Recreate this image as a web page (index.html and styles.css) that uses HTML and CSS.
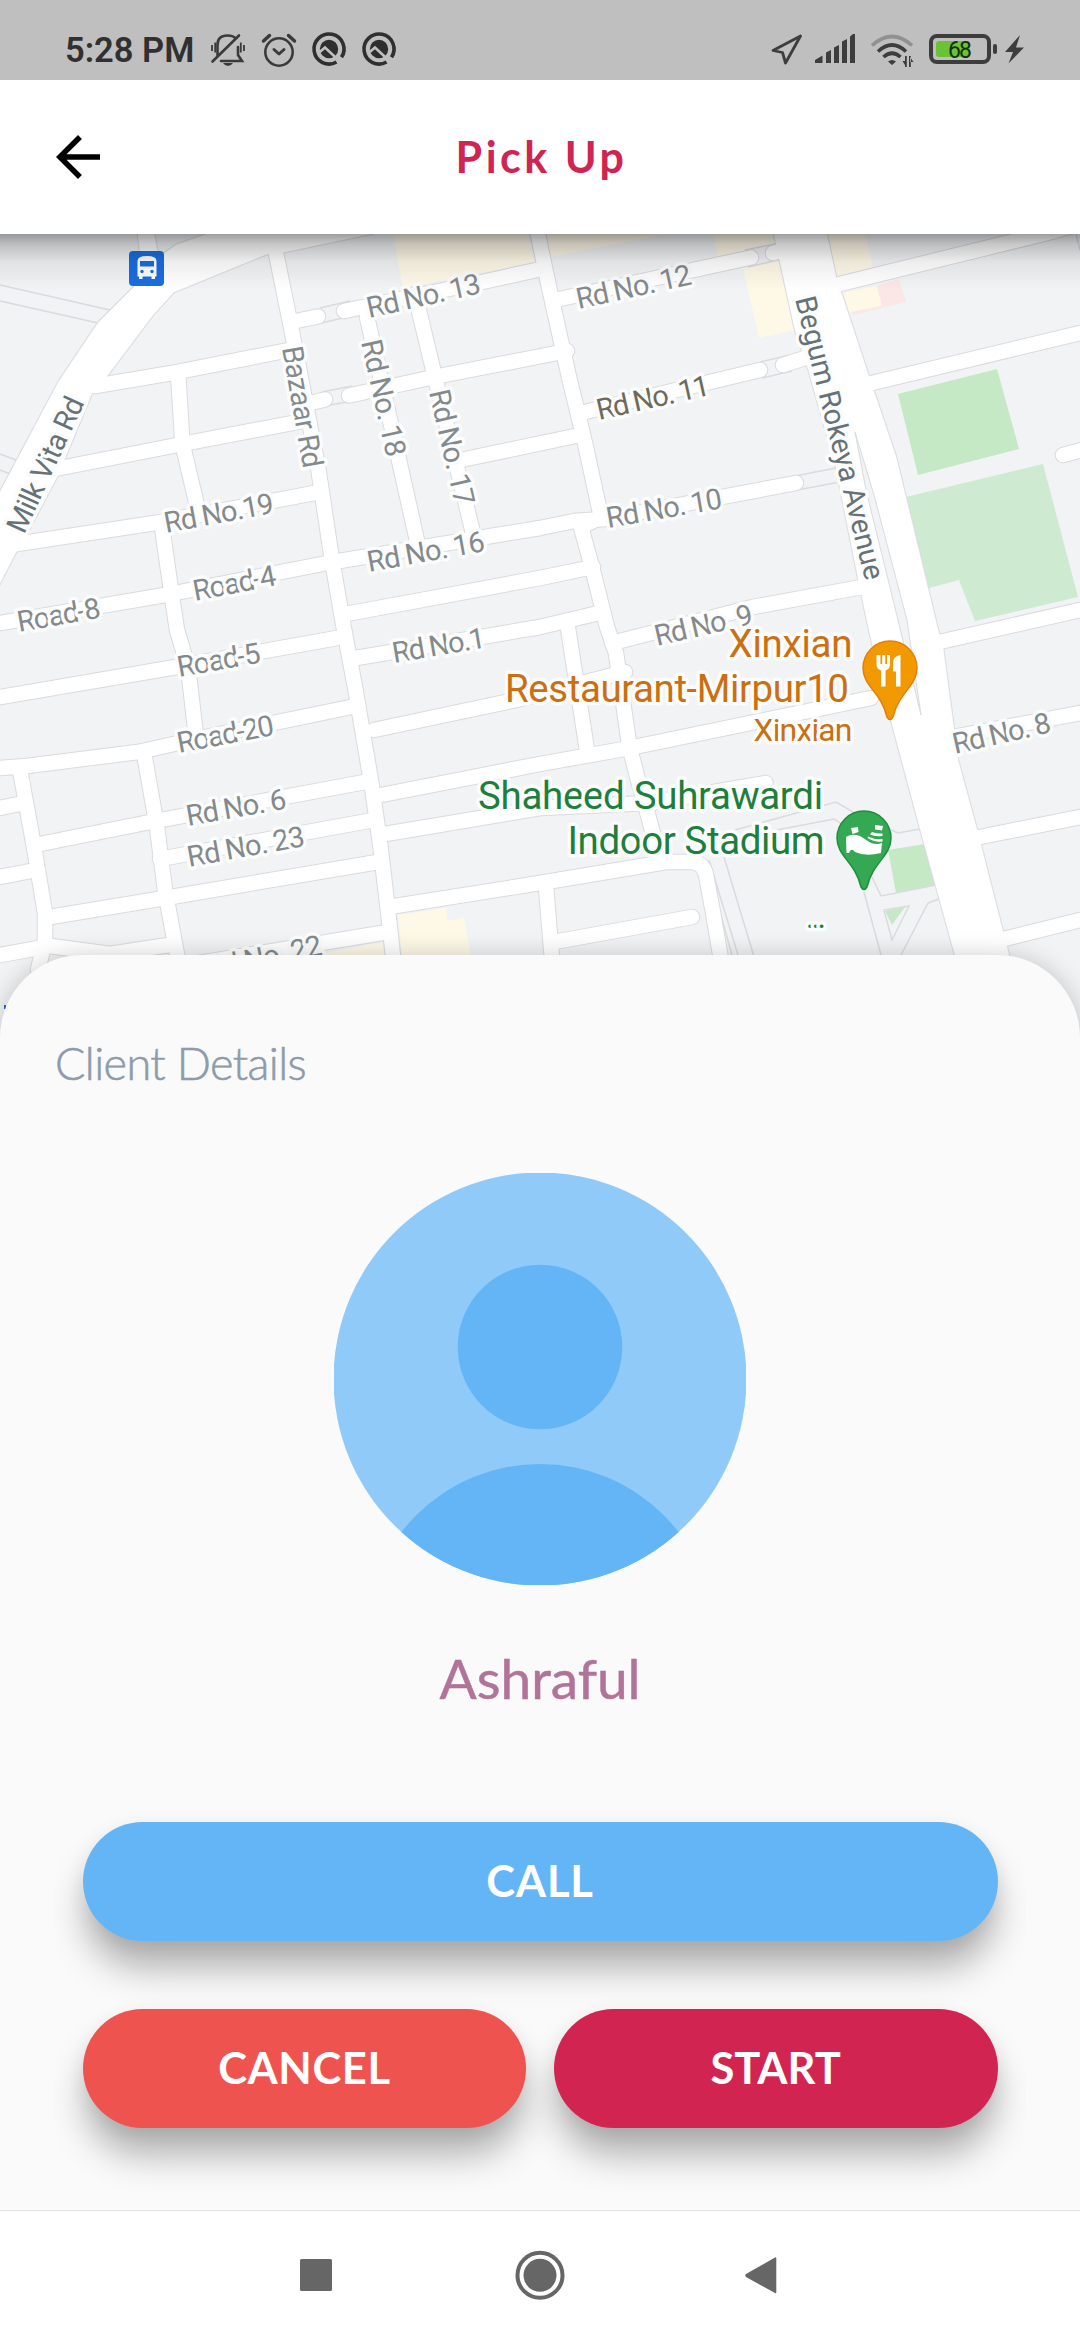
FILE: index.html
```html
<!DOCTYPE html>
<html lang="en">
<head>
<meta charset="utf-8">
<title>Pick Up</title>
<link rel="stylesheet" href="styles.css">
</head>
<body>
<div class="screen">
  <header class="status">
    <span class="clock">5:28 PM</span>
    <svg class="status-left" viewBox="210 20 190 60" width="190" height="60">
      <g fill="none" stroke="#3a3a3a" stroke-width="2.6">
        <path d="M217.500 56V45q0-9.500 10-9.500 6 0 8 3M238 47V55l4 6H221M212.500 61.500 239 35.500" stroke-linecap="round"/>
        <path d="M212 45v6M215.200 42.500v10M244 45v6M240.800 42.500v10" stroke-width="1.800"/>
        <circle cx="279" cy="52" r="13.700"/>
        <path d="M274 49.500l5 4.500 5-4.500" stroke-linecap="round" stroke-linejoin="round" stroke-width="3"/>
        <path d="M263.500 41l6-5.500M294.500 41l-6-5.500" stroke-width="3.500" stroke-linecap="round"/>
      </g>
      <path d="M223 63h10q-2 3-5 3t-5-3z" fill="#3a3a3a"/>
      <g id="qmark">
        <path d="M336.500 62A15 15 0 1 1 341.500 57.300" fill="none" stroke="#2f2f2f" stroke-width="3.600"/>
        <circle cx="329" cy="49" r="9.200" fill="#2f2f2f"/>
        <path d="M318 53.500L325 47.500 341 62.500" fill="none" stroke="#bfbfbf" stroke-width="2.600"/>
      </g>
      <use href="#qmark" x="50"/>
    </svg>
    <svg class="status-right" viewBox="765 20 265 60" width="265" height="60">
      <path d="M773 50.500L800.500 36 785.500 63 782.500 52.500z" fill="none" stroke="#3d3d3d" stroke-width="2.800" stroke-linejoin="round"/>
      <path d="M815 62.500v-2.500l7.500-4.500v7.500h-7.500zM826 63V52.500l5-2.500v13zM834 63V47.500l5-2.500v18zM842 63V41.500l5-2.500v24zM850 63V36.500l3-2.500h2v29z" fill="#3d3d3d"/>
      <g fill="none" stroke-width="3.600">
        <path d="M872 45.500Q892 27.500 912 45.500" stroke="#919191"/>
        <path d="M878 51.500Q892 38.500 906 51.500M883.500 57Q892 49.500 900.500 57" stroke="#3d3d3d"/>
      </g>
      <path d="M888 61.500q4-3 8 0l-4 3.500zM902.500 61h3v5zM906.800 56v11h-1.800V56zM909 56v11h1.800V56zM910 57l3.500 5H910z" fill="#3d3d3d"/>
      <rect x="931" y="36" width="58" height="26" rx="6" fill="none" stroke="#3d3d3d" stroke-width="4"/>
      <rect x="936" y="41" width="34" height="16" rx="3" fill="#6bc235"/>
      <rect x="993" y="44" width="4" height="10" rx="2" fill="#3d3d3d"/>
      <path d="M1020 35L1005 52h8l-4.500 11.500L1024 47.500h-8z" fill="#3d3d3d"/>
      <text class="battery" x="948" y="57.500" textLength="24">68</text>
    </svg>
  </header>
  <nav class="appbar">
    <svg class="back" viewBox="0 0 24 24" width="66" height="66"><path d="M20 11H7.830l5.590-5.590L12 4l-8 8 8 8 1.410-1.410L7.830 13H20v-2z"/></svg>
    <h1 class="title">Pick Up</h1>
  </nav>
  <main class="content">
    <svg class="map" viewBox="0 234 1080 826" width="1080" height="826">
      <defs>
        <g id="roads">
          <path d="M276 240V253L291 327 318.500 470 332 560 344 629 355 687 372 787 380.500 847 389 920 394 965"/>
          <path d="M95 386L172 373 289 350M45 471L182.500 444 303 421M310 403L325 399.500M349 395.500L434 377 567 351M291 322L318 316.500M344 311L482 282 541 269"/>
          <path d="M178 373L182.500 444 198 510M10 545L155 523 320 492M0 623L165 595 327 563 540 528 574 521 605 519 796 483"/>
          <path d="M162 527L172 597 177 630 188 667 196 736M0 697L176 667 337 638M350 659L540 627 603 612M346 614L540 578 593 567"/>
          <path d="M461 460L580 435M367 317L418 545M415 294L435.600 380 473.500 535"/>
          <path d="M0 768L27 766 138 752 196 739 351 707M374 730L516 700 625 672M20 770L34 847 45 913 45 940 38 970M0 808L24 803M0 877L36 870"/>
          <path d="M40 844L150 822 365 782M376 796L540 764 629.500 748 871 698M144 753L157 827 165 890 179 965M160 859L368 821M385 834L540 808 650 803 765.500 783"/>
          <path d="M50 917L165 898 378 862M0 955L50 946 110 954 169 945M175 967L382 933M389 907L540 883 666 862 693 862Q704 864 706 875L712 907 722 965"/>
          <path d="M546 887L551 948 553 965M554 942L692 917M567.500 625L587 750M537 230L549 287 569 377 585 443 601 517 581 527 592 567 607 627 616 653 629.500 747 638 780 648 815 660 860"/>
          <path d="M612 643L753 607 862 587M555 300L751 257.500M773 253L795 247M585 412L760 370M783 365L805 358"/>
          <path d="M839.600 284L1043 234 1080 224M872 383L1080 333M1063 455L1090 448M935 643L1080 610M953 737L1080 713M975 838L1080 817M1000 940L1080 920"/>
          <path class="wide" d="M137 228L141 258 134 287 98 323 58.500 382 0 492-10 505V605L0 583 15.500 553 26 535 57 477 92 393 107 376 153 315 174 292 267 254 285 252 370 234 390 228H225L207 234 176 245 162 255 157 250 153 228z"/>
          <path class="wide" d="M772 226L774 234 795 330 808.600 370 836 467 858.500 580 869 630 891 720 920.500 830 955 955 965 990H1018L1003 932 977 830 958 760 943 648 938 630 896 457 869 377 836 277 825 226z"/>
        </g>
        <linearGradient id="barShade" x1="0" y1="0" x2="0" y2="1">
          <stop offset="0" stop-color="#000" stop-opacity=".38"/>
          <stop offset=".18" stop-color="#000" stop-opacity=".22"/>
          <stop offset=".5" stop-color="#000" stop-opacity=".07"/>
          <stop offset="1" stop-color="#000" stop-opacity="0"/>
        </linearGradient>
      </defs>
      <rect y="234" width="1080" height="826" fill="#f1f3f5"/>
      <g fill="#fef8e7">
        <path d="M393 234H528L535 262 403 288zM545 234H667L550 257zM713 234H773L776 244 718 257zM743 268L780 261 795 330 759 338zM827 234H865L873 267 837 277zM843 293L877 286 882 306 848 313z"/>
        <path d="M398 915L446 908 448 921 464 918 473 965H403zM327 953L383 942 386 965H320z"/>
      </g>
      <path d="M877 286L899 279 906 302 853 315 851 312 882 306z" fill="#fbe7e6"/>
      <path d="M898 394L997 369 1019 449 918 475zM888 850L925 844 935 885 896 893zM885 911L905 907 892 925z" fill="#c5e8c5"/>
      <path d="M906 497L1043 464 1078 597 975 621 959 580 929 588z" fill="#ceead0"/>
      <g class="paths">
        <path d="M0 285L110 310M0 301L98 323M0 454L16 460M0 470L10 474M1076 234L1080 250"/>
        <path d="M735 830L836 802 853 812 880 825 898 833 920 829M735 838L834 819 843 825M709 860L738 955M724 857L753.500 955M872 877L881 896 936 885M864 892L881 955M884 910L909 906 892 940zM939 899L928 903 901 955"/>
        <path d="M711 880L732 955M320 308L350 301M321 323L352 316M322 392L352 386M324 406L353 401M745 250L780 243M748 267L782 259M760 362L790 355M762 378L792 371M790 477L836 468M792 491L840 482"/>
      </g>
      <use href="#roads" class="casing"/>
      <use href="#roads" class="surface"/>
      <path d="M855 432L874 495 907 620 921 715 898 620 866 490z" fill="#f1f3f5" stroke="#d9dbdf"/>
      <g class="label">
        <text transform="translate(369 318) rotate(-12.500)" textLength="116">Rd No. 13</text>
        <text transform="translate(578.500 309) rotate(-12.300)" textLength="117">Rd No. 12</text>
        <text class="dark" transform="translate(599 420) rotate(-12.700)" textLength="115">Rd No. 11</text>
        <text transform="translate(608 528) rotate(-9.800)" textLength="117">Rd No. 10</text>
        <text transform="translate(657 646) rotate(-13)" textLength="100">Rd No. 9</text>
        <text transform="translate(166 533) rotate(-10.500)" textLength="111">Rd No.19</text>
        <text transform="translate(195 601) rotate(-11)" textLength="84">Road-4</text>
        <text transform="translate(19 632) rotate(-10)" textLength="84">Road-8</text>
        <text transform="translate(369 572) rotate(-10.300)" textLength="119">Rd No. 16</text>
        <text transform="translate(179 677) rotate(-10)" textLength="84">Road-5</text>
        <text transform="translate(179 753) rotate(-10.800)" textLength="98">Road-20</text>
        <text transform="translate(188 826) rotate(-10)" textLength="101">Rd No. 6</text>
        <text transform="translate(189 867) rotate(-10.300)" textLength="119">Rd No. 23</text>
        <text transform="translate(394 663) rotate(-9.600)" textLength="94">Rd No.1</text>
        <text transform="translate(209 979) rotate(-12)" textLength="117">Rd No. 22</text>
        <text transform="translate(955 754) rotate(-12.800)" textLength="100">Rd No. 8</text>
        <text transform="translate(282 348) rotate(80)" textLength="123">Bazaar Rd</text>
        <text transform="translate(361 342) rotate(77.500)" textLength="119">Rd No. 18</text>
        <text transform="translate(429 392) rotate(77)" textLength="118">Rd No. 17</text>
        <text class="main" transform="translate(24 535) rotate(-65.400)" textLength="146">Milk Vita Rd</text>
        <text class="main" transform="translate(795 299) rotate(76)" textLength="291">Begum Rokeya Avenue</text>
      </g>
      <g class="poi food">
        <text x="728.500" y="656.700" textLength="124">Xinxian</text>
        <text x="505" y="701.700" textLength="344">Restaurant-Mirpur10</text>
        <text class="small" x="753.500" y="740.700" textLength="99">Xinxian</text>
      </g>
      <g class="poi sport">
        <text x="478" y="809" textLength="345">Shaheed Suhrawardi</text>
        <text x="567.500" y="854" textLength="257">Indoor Stadium</text>
        <text class="small" x="806" y="928" textLength="20">...</text>
      </g>
      <path d="M863 668A27 27 0 0 1 917 668C917 686 899 692 893 717Q890 722 887 717C881 692 863 686 863 668z" fill="#f29900" stroke="#e37f0a" stroke-width="1.500"/>
      <path d="M876.500 655v9q0 5 4.500 6.500V686.500h4.500V670.500q4.500-1.500 4.500-6.500v-9h-3v9h-1.800v-9h-3v9h-1.800v-9zM900.500 655V686.500h-4.500V671.500h-3V663q0-7 7.500-8z" fill="#fff"/>
      <path d="M837 838A27 27 0 0 1 891 838C891 856 873 862 867 887Q864 892 861 887C855 862 837 856 837 838z" fill="#34a853" stroke="#1e8e3e" stroke-width="1.500"/>
      <path d="M846 837Q852 833 860 836L871 843Q877 845 882 843L881 853Q866 857 855 852 851 847 849 853H846.500zM851 828l7-1 .5 5-6 2zM875 825l8 1-1 4.500-7-1zM872 832q6 2 10.500 1.500V836Q875 837 870 834.500zM868 836.500q7 3.500 14.500 2.500v2.500q-8 1-15-3.500z" fill="#fff"/>
      <rect x="129" y="251" width="35" height="35" rx="4" fill="#1a6de0"/>
      <path d="M137.500 261q0-5 9.500-5t9.500 5v15.500h-1.500V279h-3.500v-2.500h-9V279H139v-2.500h-1.500z" fill="#fff"/>
      <path d="M140 261h14v5.500h-14z" fill="#1a6de0"/>
      <circle cx="142" cy="271.500" r="1.700" fill="#1a6de0"/><circle cx="152" cy="271.500" r="1.700" fill="#1a6de0"/>
      <path d="M5 1005v4" stroke="#1a6de0" stroke-width="2"/>
      <rect y="234" width="1080" height="56" fill="url(#barShade)"/>
    </svg>
    <section class="panel">
      <h2 class="heading">Client Details</h2>
      <svg class="avatar" viewBox="0 0 412 412" width="412" height="412">
        <clipPath id="face"><circle cx="206" cy="206" r="206.500"/></clipPath>
        <g clip-path="url(#face)">
          <rect width="412" height="412" fill="#90caf9"/>
          <circle cx="206" cy="174" r="82.300" fill="#64b5f6"/>
          <circle cx="206" cy="466" r="175" fill="#64b5f6"/>
        </g>
      </svg>
      <p class="name">Ashraful</p>
      <div class="actions">
        <button class="btn call">CALL</button>
        <div class="pair">
          <button class="btn cancel">CANCEL</button>
          <button class="btn start">START</button>
        </div>
      </div>
    </section>
  </main>
  <footer class="navbar">
    <svg viewBox="290 2245 500 60" width="500" height="60" fill="#666">
      <rect x="300" y="2259" width="32" height="32" rx="1.500"/>
      <circle cx="540" cy="2275.300" r="16.500"/>
      <circle cx="540" cy="2275.300" r="22.500" fill="none" stroke="#666" stroke-width="4"/>
      <path d="M775 2257.500q1.300-.7 1.300 1V2292q0 1.700-1.300 1L746 2277q-1.500-1.500 0-3z"/>
    </svg>
  </footer>
</div>
</body>
</html>
```

FILE: styles.css
```css
* { box-sizing: border-box; }
body { margin: 0; font-family: Roboto, sans-serif; background: #fff; }
.screen { width: 1080px; height: 2340px; display: flex; flex-direction: column; overflow: hidden; }

.status { flex: none; height: 80px; background: #bfbfbf; display: flex; align-items: flex-end; padding-left: 65px; padding-right: 50px; color: #303030; }
.clock { width: 145px; height: 60px; line-height: 60px; font-size: 34.500px; font-weight: 600; white-space: nowrap; }
.status-right { margin-left: auto; }
.battery { font-size: 23px; font-weight: 400; fill: #16300a; }

.appbar { flex: none; height: 154px; background: #fff; display: grid; grid-template-columns: 66px 1fr 66px; align-items: center; padding: 0 44.500px; }
.title { margin: 0; text-align: center; font-family: Lato, sans-serif; font-weight: 700; font-size: 43px; line-height: 60px; letter-spacing: 3.500px; text-indent: 3px; color: #d02552; }

.content { flex: 1; min-height: 0; display: grid; grid-template-rows: 721px 1fr; }
.map { grid-area: 1 / 1; display: block; }
.casing { --wide: 2.500px; fill: none; stroke: #d9dbdf; stroke-width: 16.500px; stroke-linecap: round; stroke-linejoin: round; }
.surface { --wide: .500px; fill: none; stroke: #fff; stroke-width: 14.500px; stroke-linecap: round; stroke-linejoin: round; }
.wide { fill: #fff; stroke-width: var(--wide); }
.paths { fill: none; stroke: #d9dbdf; stroke-width: 1.500px; }
.label { font-size: 29px; fill: #84898c; }
.label text, .poi text { paint-order: stroke; stroke: #fbfcfc; stroke-width: 7px; stroke-linejoin: round; }
.label .dark { fill: #6e6a5b; }
.label .main { fill: #667277; }
.poi { font-size: 38.500px; }
.poi .small { font-size: 32px; }
.food { fill: #cb6f10; }
.sport { fill: #1e7e3c; }

.panel { grid-area: 2 / 1; position: relative; background: #fafafa; border-radius: 82.500px 82.500px 0 0; box-shadow: 0 2px 26px rgba(0, 0, 0, .22); padding: 78px 55px 0; display: flex; flex-direction: column; align-items: center; }
.heading { align-self: flex-start; margin: 0; height: 60px; line-height: 60px; font-family: Lato, sans-serif; font-weight: 300; font-size: 45px; letter-spacing: -.6px; color: #8d9bab; -webkit-text-stroke: .6px #8d9bab; white-space: nowrap; }
.avatar { flex: none; margin-top: 80px; }
.name { margin: 58px 0 0; height: 70px; line-height: 70px; font-family: Lato, sans-serif; font-weight: 400; font-size: 55px; color: #b27399; -webkit-text-stroke: .5px #b27399; }
.actions { align-self: stretch; flex: 1; margin-top: 82px; padding: 27px 27.500px 0; overflow: hidden; display: flex; flex-direction: column; gap: 68.500px; }
.pair { display: grid; grid-template-columns: 1fr 1fr; gap: 27.500px; }
.btn { flex: none; height: 118.500px; border: 0; border-radius: 60px; padding: 0 0 3px; font-family: Lato, sans-serif; font-weight: 700; font-size: 43.500px; color: #fff; box-shadow: 0 29px 37px -3px rgba(0, 0, 0, .31), 0 4px 20px rgba(0, 0, 0, .06); }
.call { background: #64b5f6; letter-spacing: .8px; }
.cancel { background: #ef5350; letter-spacing: .6px; }
.start { background: #d22450; }

.navbar { flex: none; position: relative; height: 130px; background: #fff; border-top: 1.500px solid #e4e4e4; display: flex; justify-content: center; padding: 34px 0 0; }
```
